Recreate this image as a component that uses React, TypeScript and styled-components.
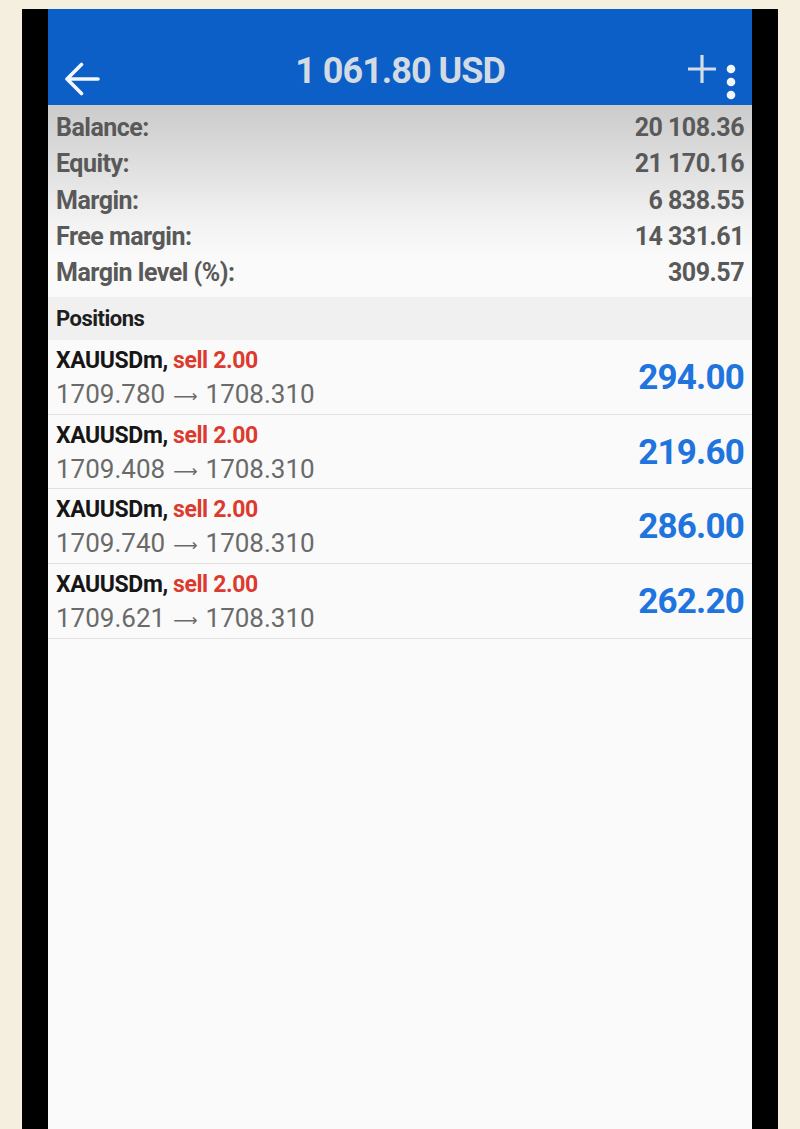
import React from "react";
import styled, { createGlobalStyle } from "styled-components";

const Global = createGlobalStyle`
  html, body { margin: 0; padding: 0; }
  body {
    background: #f5efe0;
    font-family: Roboto, "Liberation Sans", Arial, sans-serif;
  }
`;

const Phone = styled.div`
  margin: 9px 0 0 22px;
  width: 756px;
  min-height: 1120px;
  box-sizing: border-box;
  background: #000;
  padding: 0 26px;
  display: flex;
`;

const Screen = styled.div`
  flex: 1;
  background: #fafafa;
  display: flex;
  flex-direction: column;
`;

const Header = styled.header`
  height: 96px;
  background: #0b5fc6;
  display: grid;
  grid-template-columns: 1fr auto 1fr;
  align-items: start;
  padding: 0 16px 0 16px;
`;

const BackBtn = styled.div`
  margin-top: 53px;
  display: flex;
`;

const Title = styled.h1`
  margin: 44px 0 0;
  font-size: 36px;
  line-height: 36px;
  font-weight: 700;
  letter-spacing: -1px;
  color: #d2dae3;
`;

const Actions = styled.div`
  justify-self: end;
  display: flex;
  align-items: flex-start;
  gap: 9px;
`;

const PlusIcon = styled.svg`
  margin-top: 45px;
`;

const DotsIcon = styled.svg`
  margin-top: 51px;
`;

const Summary = styled.section`
  padding: 5px 8px 6px;
  background: linear-gradient(#cbcbcb 0%, #dedede 30%, #f3f3f3 62%, #fafafa 80%);
`;

const SummaryRow = styled.div`
  display: flex;
  justify-content: space-between;
  font-size: 25px;
  line-height: 36.25px;
  font-weight: 700;
  letter-spacing: -0.5px;
  color: #595959;
`;

const SectionBar = styled.div`
  height: 43px;
  background: #f0f0f0;
  padding: 0 8px;
  font-size: 22px;
  line-height: 43px;
  font-weight: 700;
  letter-spacing: -0.5px;
  color: #1e1e1e;
`;

const PositionRow = styled.div`
  height: 74.6px;
  box-sizing: border-box;
  padding: 5px 8px 0;
  border-bottom: 1.5px solid #e0e0e0;
  display: flex;
  justify-content: space-between;
  align-items: center;
`;

const PosInfo = styled.div`
  display: flex;
  flex-direction: column;
  align-self: flex-start;
`;

const Symbol = styled.div`
  font-size: 23px;
  line-height: 31px;
  font-weight: 700;
  letter-spacing: -0.4px;
  color: #161616;
`;

const Side = styled.span`
  color: #dc3a2e;
`;

const Prices = styled.div`
  font-size: 26px;
  line-height: 37px;
  font-weight: 400;
  color: #6a6a6a;
  display: flex;
  align-items: baseline;
`;

const Arrow = styled.span`
  font-family: "DejaVu Sans", sans-serif;
  font-size: 17px;
  margin: 0 8px;
  position: relative;
  top: -1px;
`;

const Profit = styled.div`
  font-size: 35px;
  line-height: 35px;
  font-weight: 700;
  letter-spacing: -0.8px;
  color: #1f74dd;
  margin-top: -4px;
`;

const summary = [
  ["Balance:", "20 108.36"],
  ["Equity:", "21 170.16"],
  ["Margin:", "6 838.55"],
  ["Free margin:", "14 331.61"],
  ["Margin level (%):", "309.57"],
];

const positions = [
  { open: "1709.780", cur: "1708.310", profit: "294.00" },
  { open: "1709.408", cur: "1708.310", profit: "219.60" },
  { open: "1709.740", cur: "1708.310", profit: "286.00" },
  { open: "1709.621", cur: "1708.310", profit: "262.20" },
];

export default function App() {
  return (
    <>
      <Global />
      <Phone>
        <Screen>
          <Header>
            <BackBtn>
              <svg width="36" height="34" viewBox="0 0 36 34" fill="none">
                <path
                  d="M34 17H3M17.5 2.5L3 17l14.5 14.5"
                  stroke="#f3f6fa"
                  strokeWidth="3.6"
                  strokeLinecap="round"
                  strokeLinejoin="round"
                />
              </svg>
            </BackBtn>
            <Title>1 061.80 USD</Title>
            <Actions>
              <PlusIcon width="30" height="30" viewBox="0 0 30 30" fill="none">
                <path d="M15 1v28M1 15h28" stroke="#d4dce5" strokeWidth="3.2" />
              </PlusIcon>
              <DotsIcon width="10" height="44" viewBox="0 0 10 44" fill="#f3f6fa">
                <circle cx="5" cy="9" r="4.3" />
                <circle cx="5" cy="22" r="4.3" />
                <circle cx="5" cy="35" r="4.3" />
              </DotsIcon>
            </Actions>
          </Header>
          <Summary>
            {summary.map(([k, v]) => (
              <SummaryRow key={k}>
                <span>{k}</span>
                <span>{v}</span>
              </SummaryRow>
            ))}
          </Summary>
          <SectionBar>Positions</SectionBar>
          {positions.map((p, i) => (
            <PositionRow key={i}>
              <PosInfo>
                <Symbol>
                  XAUUSDm, <Side>sell 2.00</Side>
                </Symbol>
                <Prices>
                  <span>{p.open}</span>
                  <Arrow>⟶</Arrow>
                  <span>{p.cur}</span>
                </Prices>
              </PosInfo>
              <Profit>{p.profit}</Profit>
            </PositionRow>
          ))}
        </Screen>
      </Phone>
    </>
  );
}
